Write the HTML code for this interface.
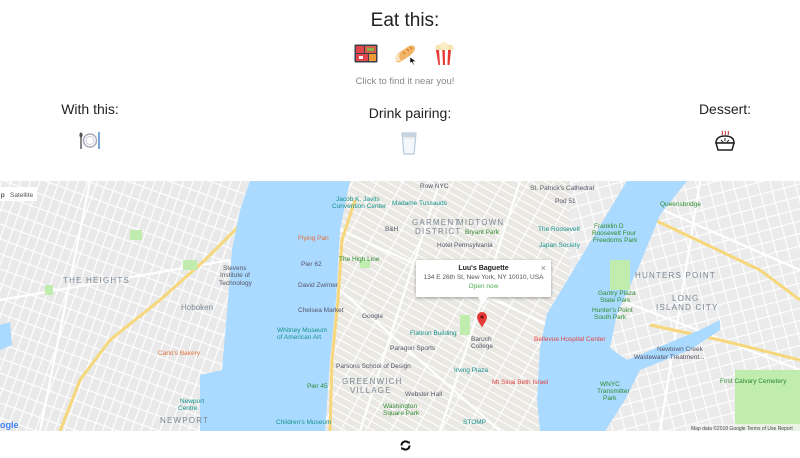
<!DOCTYPE html>
<html><head><meta charset="utf-8"><style>
*{margin:0;padding:0;box-sizing:border-box}
body{width:800px;height:458px;background:#fff;font-family:"Liberation Sans",sans-serif;position:relative;overflow:hidden;color:#333}
.t{position:absolute;text-align:center;white-space:nowrap}
svg{position:absolute;display:block}
</style></head><body>
<div class="t" style="left:0;width:810px;top:10px;font-size:19px;color:#222">Eat this:</div>
<svg style="left:354px;top:44px" width="24" height="19" viewBox="0 0 24 19"><rect x="0.5" y="0.5" width="23" height="18" fill="#3b3f4c" rx="1"/><rect x="2" y="2" width="8" height="7" fill="#e2474d"/><rect x="11" y="2" width="11" height="7" fill="#d96048"/><rect x="13" y="4" width="7" height="3" fill="#8db04a"/><rect x="2" y="10" width="12" height="7" fill="#e2474d"/><rect x="5" y="12" width="4" height="3" fill="#fff"/><rect x="15" y="10" width="7" height="7" fill="#f09a3a"/></svg>
<svg style="left:393px;top:44px" width="26" height="22" viewBox="0 0 26 22"><path d="M3 17 Q1 12 7 8 L16 2 Q22 0 22 5 Q21 9 15 13 L7 18 Q4 19 3 17Z" fill="#f2b466"/><path d="M3 17 Q1 12 7 9 Q5 14 8 17Z" fill="#fbe3bd"/><path d="M10 8l2 2M14 5l2 2M17 3l2 2" stroke="#c77a2a" stroke-width="1.2"/><path d="M17 13l0 6l2-1l1 3l1-.5l-1-3l3 0z" fill="#111" stroke="#fff" stroke-width=".5"/></svg>
<svg style="left:434px;top:42px" width="22" height="24" viewBox="0 0 22 24"><circle cx="5" cy="6" r="3.5" fill="#f8e4b0"/><circle cx="10" cy="4" r="4" fill="#fbeec4"/><circle cx="16" cy="6" r="3.5" fill="#f8e4b0"/><path d="M2 8h18l-2.5 15h-13z" fill="#fff"/><path d="M2 8h3l1 15h-1.5zM8.3 8h2.5l.2 15h-2zM14 8h3l-1.5 15h-2z" fill="#e53935"/></svg>
<div class="t" style="left:0;width:810px;top:76px;font-size:9.5px;color:#888">Click to find it near you!</div>

<div class="t" style="left:40px;width:100px;top:101px;font-size:14px;color:#222">With this:</div>
<svg style="left:78px;top:131px" width="24" height="19" viewBox="0 0 24 19"><circle cx="12" cy="9.5" r="6.5" fill="none" stroke="#aab" stroke-width="1.5"/><circle cx="12" cy="9.5" r="4" fill="none" stroke="#ccd" stroke-width="1"/><path d="M3 2v16" stroke="#555" stroke-width="1.4"/><path d="M21 1v17" stroke="#3f7fc2" stroke-width="1.4"/><ellipse cx="3" cy="4" rx="1.6" ry="2.5" fill="#555"/></svg>
<div class="t" style="left:355px;width:110px;top:105px;font-size:14px;color:#222">Drink pairing:</div>
<svg style="left:400px;top:131px" width="18" height="25" viewBox="0 0 18 25"><path d="M2 2h14l-2 21h-10z" fill="#f4f8fc" stroke="#b8c9dc" stroke-width="1.2"/><path d="M2.3 2h13.4l-.3 4h-12.8z" fill="#c7d5e3"/><path d="M3 7h12" stroke="#e8e0d0" stroke-width="1"/></svg>
<div class="t" style="left:690px;width:70px;top:101px;font-size:14px;color:#222">Dessert:</div>
<svg style="left:713px;top:130px" width="24" height="24" viewBox="0 0 24 24"><path d="M9 1q1 2 0 4M12 1q1 2 0 4M15 1q1 2 0 4" stroke="#c33" stroke-width="1" fill="none"/><path d="M3 13q0-7 9-7t9 7z" fill="#fff" stroke="#222" stroke-width="1.5"/><path d="M3 13h18l-2 7h-14z" fill="#fff" stroke="#222" stroke-width="1.5"/><path d="M8 10l2 2M14 12l2-2M12 8v3" stroke="#222" stroke-width="1"/></svg>

<svg style="left:0;top:181px" width="800" height="250" viewBox="0 181 800 250">
<defs>
<pattern id="pa" width="9" height="14" patternUnits="userSpaceOnUse" patternTransform="rotate(20)"><rect width="9" height="14" fill="#e9e9e9"/><path d="M0 0.5H9M0.5 0V14" stroke="#fff" stroke-width="1.3"/></pattern>
<pattern id="pb" width="7" height="22" patternUnits="userSpaceOnUse" patternTransform="rotate(-61)"><rect width="7" height="22" fill="#eae8e3"/><path d="M0 0.5H7M0.5 0V22" stroke="#fff" stroke-width="1.2"/></pattern>
<pattern id="pc" width="12" height="12" patternUnits="userSpaceOnUse" patternTransform="rotate(-15)"><rect width="12" height="12" fill="#ebebeb"/><path d="M0 0.5H12M0.5 0V12" stroke="#fff" stroke-width="1.2"/></pattern>
</defs>
<rect x="0" y="181" width="800" height="250" fill="url(#pa)"/>
<rect x="330" y="181" width="240" height="250" fill="url(#pb)"/>
<rect x="570" y="181" width="230" height="250" fill="url(#pc)"/>
<g stroke="#fff" stroke-width="2.2" fill="none">
<path d="M340 230L560 330M340 290L500 431M440 181L360 431M520 181L440 431M0 300L230 260M90 181L40 431"/>
<path d="M640 200L800 270M620 300L800 370M700 181L660 431"/>
</g>
<path d="M268 181L250 215L205 260L160 300L110 340L80 380L60 431" stroke="#f7d77b" stroke-width="3" fill="none"/>
<path d="M355 200L342 240L338 300L332 360L330 431" stroke="#f7d77b" stroke-width="3" fill="none"/>
<path d="M550 380L560 330L580 300M640 213L760 270L800 300M650 325L720 340L800 360" stroke="#f7d77b" stroke-width="3" fill="none"/>
<path d="M250 181L350 181L346 200L340 230L336 300L330 360L325 431L223 431L200 431L200 375L222 370L228 300L232 250L240 210Z" fill="#aadaff"/>
<path d="M627 181L687 181L660 215L640 264L617 314L610 348L627 360L700 330L720 320L720 330L690 350L640 370L625 400L605 431L540 431L537 400L540 348L547 314L577 264Z" fill="#aadaff"/>
<path d="M0 325L10 322L12 345L0 350Z" fill="#aadaff"/>
<g fill="#c0ecae"><rect x="130" y="230" width="12" height="10"/><rect x="183" y="260" width="14" height="10"/><rect x="45" y="285" width="8" height="10"/><rect x="610" y="260" width="20" height="30"/><rect x="735" y="370" width="65" height="61"/><rect x="460" y="315" width="10" height="20"/><rect x="500" y="285" width="12" height="12"/><rect x="360" y="260" width="10" height="8"/></g>
<g font-family="Liberation Sans,sans-serif" font-size="6.5">
<text x="63" y="283" fill="#7a8794" font-size="8" letter-spacing="1.2">THE HEIGHTS</text>
<text x="181" y="310" fill="#7a8794" font-size="8">Hoboken</text>
<text x="223" y="270" fill="#556">Stevens</text><text x="220" y="277" fill="#556">Institute of</text><text x="219" y="285" fill="#556">Technology</text>
<text x="412" y="225" fill="#7a8794" font-size="8" letter-spacing="1.2">GARMENT</text><text x="415" y="234" fill="#7a8794" font-size="8" letter-spacing="1.2">DISTRICT</text>
<text x="457" y="225" fill="#7a8794" font-size="8" letter-spacing="1.2">MIDTOWN</text>
<text x="342" y="384" fill="#7a8794" font-size="8" letter-spacing="1.2">GREENWICH</text><text x="350" y="393" fill="#7a8794" font-size="8" letter-spacing="1.2">VILLAGE</text>
<text x="635" y="278" fill="#7a8794" font-size="8" letter-spacing="1.2">HUNTERS POINT</text>
<text x="672" y="301" fill="#7a8794" font-size="8" letter-spacing="1.2">LONG</text><text x="656" y="310" fill="#7a8794" font-size="8" letter-spacing="1.2">ISLAND CITY</text>
<text x="160" y="423" fill="#7a8794" font-size="8" letter-spacing="1.2">NEWPORT</text>
<text x="298" y="240" fill="#e0703a">Flying Pan</text>
<text x="336" y="201" fill="#15928c">Jacob K. Javits</text><text x="332" y="208" fill="#15928c">Convention Center</text>
<text x="392" y="205" fill="#15928c">Madame Tussauds</text>
<text x="420" y="188" fill="#556">Row NYC</text>
<text x="530" y="190" fill="#556">St. Patrick's Cathedral</text>
<text x="538" y="231" fill="#15928c">The Roosevelt</text>
<text x="539" y="247" fill="#15928c">Japan Society</text>
<text x="594" y="228" fill="#2e8b2e">Franklin D</text><text x="592" y="235" fill="#2e8b2e">Roosevelt Four</text><text x="593" y="242" fill="#2e8b2e">Freedoms Park</text>
<text x="660" y="206" fill="#2e8b2e">Queensbridge</text>
<text x="437" y="247" fill="#556">Hotel Pennsylvania</text>
<text x="339" y="261" fill="#2e8b2e">The High Line</text>
<text x="298" y="287" fill="#556">David Zwirner</text>
<text x="298" y="312" fill="#556">Chelsea Market</text>
<text x="362" y="318" fill="#556">Google</text>
<text x="277" y="332" fill="#15928c">Whitney Museum</text><text x="277" y="339" fill="#15928c">of American Art</text>
<text x="410" y="335" fill="#15928c">Flatiron Building</text>
<text x="390" y="350" fill="#556">Paragon Sports</text>
<text x="336" y="368" fill="#556">Parsons School of Design</text>
<text x="454" y="372" fill="#15928c">Irving Plaza</text>
<text x="405" y="396" fill="#556">Webster Hall</text>
<text x="383" y="408" fill="#2e8b2e">Washington</text><text x="383" y="415" fill="#2e8b2e">Square Park</text>
<text x="463" y="424" fill="#15928c">STOMP</text>
<text x="276" y="424" fill="#15928c">Children's Museum</text>
<text x="307" y="388" fill="#2e8b2e">Pier 45</text>
<text x="301" y="266" fill="#556">Pier 62</text>
<text x="534" y="341" fill="#d44">Bellevue Hospital Center</text>
<text x="492" y="384" fill="#d44">Mt Sinai Beth Israel</text>
<text x="471" y="341" fill="#556">Baruch</text><text x="471" y="348" fill="#556">College</text>
<text x="598" y="295" fill="#2e8b2e">Gantry Plaza</text><text x="600" y="302" fill="#2e8b2e">State Park</text>
<text x="592" y="312" fill="#2e8b2e">Hunter's Point</text><text x="594" y="319" fill="#2e8b2e">South Park</text>
<text x="657" y="351" fill="#556">Newtown Creek</text><text x="634" y="359" fill="#556">Wastewater Treatment...</text>
<text x="600" y="386" fill="#2e8b2e">WNYC</text><text x="597" y="393" fill="#2e8b2e">Transmitter</text><text x="603" y="400" fill="#2e8b2e">Park</text>
<text x="720" y="383" fill="#2e8b2e">First Calvary Cemetery</text>
<text x="158" y="355" fill="#e0703a">Carlo's Bakery</text>
<text x="180" y="403" fill="#15928c">Newport</text><text x="178" y="410" fill="#15928c">Centre</text>
<text x="385" y="231" fill="#556">B&amp;H</text>
<text x="555" y="203" fill="#556">Pod 51</text>
<text x="465" y="234" fill="#2e8b2e">Bryant Park</text>
</g>
<path d="M482 312a5 5 0 0 1 5 5c0 4-5 9-5 11c0-2-5-7-5-11a5 5 0 0 1 5-5z" fill="#e53935"/><circle cx="482" cy="317" r="1.6" fill="#7a1010"/>
<rect x="0" y="187" width="37" height="14" fill="#fff"/><text x="1" y="197" font-size="6.5" font-family="Liberation Sans" fill="#000">p</text><text x="10" y="197" font-size="6.5" font-family="Liberation Sans" fill="#555">Satellite</text>
<text x="0" y="428" font-size="9" font-family="Liberation Sans" fill="#4285f4" font-weight="bold">ogle</text>
<rect x="688" y="424" width="112" height="7" fill="#f5f5f5" opacity=".8"/>
<text x="691" y="430" font-size="5" font-family="Liberation Sans" fill="#444">Map data ©2018 Google    Terms of Use    Report</text>
</svg>
<div style="position:absolute;left:416px;top:260px;width:135px;height:37px;background:#fff;box-shadow:0 1px 3px rgba(0,0,0,.35);border-radius:1px;font-size:6.5px;text-align:center">
<div style="margin-top:5px;color:#222;font-weight:bold;font-size:7px">Luu's Baguette</div>
<div style="margin-top:2px;color:#555">134 E 26th St, New York, NY 10010, USA</div>
<div style="margin-top:2px;color:#4caf50">Open now</div>
<div style="position:absolute;right:5px;top:3px;color:#888;font-size:9px">×</div>
</div>
<div style="position:absolute;left:478px;top:297px;width:0;height:0;border-left:5px solid transparent;border-right:5px solid transparent;border-top:8px solid #fff"></div>
<svg style="left:399px;top:439px" width="13" height="13" viewBox="0 0 13 13"><path d="M2.5 6.5a4 4 0 0 1 7-2.7M10.5 6.5a4 4 0 0 1-7 2.7" stroke="#111" stroke-width="2" fill="none"/><path d="M8 2.5l3 0l-0.5 3z M5 10.5l-3 0l.5-3z" fill="#111"/></svg>
</body></html>
